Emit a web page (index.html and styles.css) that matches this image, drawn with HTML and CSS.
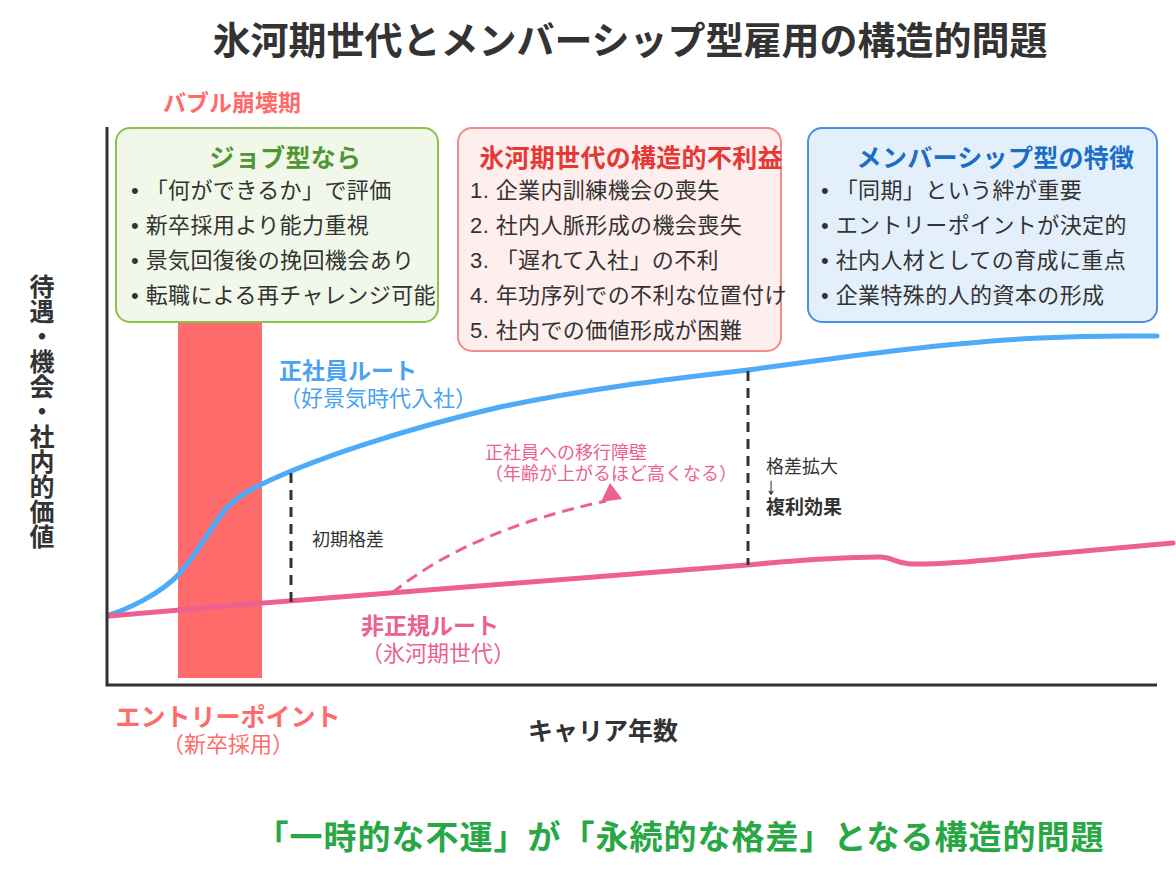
FILE: index.html
```html
<!DOCTYPE html>
<html lang="ja">
<head>
<meta charset="utf-8">
<title>氷河期世代とメンバーシップ型雇用の構造的問題</title>
<link rel="stylesheet" href="styles.css">
</head>
<body>
<div class="page">
  <h1 class="title">氷河期世代とメンバーシップ型雇用の構造的問題</h1>

  <div class="chart">
    <svg class="plot" viewBox="0 80 1176 700" width="1176" height="700" aria-hidden="true">
      <rect class="bar" x="178" y="128" width="84" height="550"/>
      <path class="line-reg" d="M109,615 C125,610 160,595 180,573 C200,550 212,525 225,510 C238,495 255,487 275,478 C320,458 400,430 500,407 C600,386 690,377 748,370 C850,356 950,342 1040,338 C1100,335 1130,336 1157,336"/>
      <path class="line-non" d="M109,616 C200,608 300,600 390,593 C520,583 640,573 747,565 C800,560 850,557 880,557 C892,557 895,563 910,564 C950,565 1000,558 1073,552 C1120,548 1150,545 1173,543"/>
      <line class="gap" x1="291" y1="473" x2="291" y2="603"/>
      <line class="gap" x1="748" y1="371" x2="748" y2="565"/>
      <path class="barrier" d="M392,593 Q470,530 606,501"/>
      <polygon class="barrier-head" points="610,483 601,502 622,499"/>
      <path class="axis" d="M107,127 V685 H1157"/>
    </svg>

    <div class="bubble">バブル崩壊期</div>
    <div class="ylabel">待遇・機会・社内的価値</div>

    <div class="cards">
      <section class="card card-job">
        <h2 class="card-title">ジョブ型なら</h2>
        <ul class="card-list">
          <li>「何ができるか」で評価</li>
          <li>新卒採用より能力重視</li>
          <li>景気回復後の挽回機会あり</li>
          <li>転職による再チャレンジ可能</li>
        </ul>
      </section>
      <section class="card card-ice">
        <h2 class="card-title">氷河期世代の構造的不利益</h2>
        <ol class="card-list numbered">
          <li>企業内訓練機会の喪失</li>
          <li>社内人脈形成の機会喪失</li>
          <li>「遅れて入社」の不利</li>
          <li>年功序列での不利な位置付け</li>
          <li>社内での価値形成が困難</li>
        </ol>
      </section>
      <section class="card card-member">
        <h2 class="card-title">メンバーシップ型の特徴</h2>
        <ul class="card-list">
          <li>「同期」という絆が重要</li>
          <li>エントリーポイントが決定的</li>
          <li>社内人材としての育成に重点</li>
          <li>企業特殊的人的資本の形成</li>
        </ul>
      </section>
    </div>

    <div class="route route-reg">
      <span class="route-name">正社員ルート</span>
      <span class="route-sub">（好景気時代入社）</span>
    </div>
    <div class="note note-barrier">
      <span>正社員への移行障壁</span>
      <span>（年齢が上がるほど高くなる）</span>
    </div>
    <div class="note note-initial">初期格差</div>
    <div class="note note-widen">
      <span>格差拡大</span>
      <span class="arrow">↓</span>
      <strong>複利効果</strong>
    </div>
    <div class="route route-non">
      <span class="route-name">非正規ルート</span>
      <span class="route-sub">（氷河期世代）</span>
    </div>
    <div class="entry">
      <span class="entry-name">エントリーポイント</span>
      <span class="entry-sub">（新卒採用）</span>
    </div>
    <div class="xlabel">キャリア年数</div>
  </div>

  <p class="conclusion">「一時的な不運」が「永続的な格差」となる構造的問題</p>
</div>
</body>
</html>
```

FILE: styles.css
```css
* { box-sizing: border-box; }

html, body {
  margin: 0;
  padding: 0;
  background: #ffffff;
}

body {
  font-family: "Liberation Sans", "Noto Sans CJK JP", sans-serif;
  color: #333333;
}

.page {
  width: 1176px;
  height: 880px;
  overflow: hidden;
}

.title {
  margin: 0;
  height: 80px;
  padding: 2px 0 0 84px;
  line-height: 78px;
  font-size: 38px;
  font-weight: 700;
  text-align: center;
  color: #333333;
  white-space: nowrap;
}

/* chart canvas */
.chart {
  position: relative;
  height: 700px;
}

.plot {
  position: absolute;
  left: 0;
  top: 0;
  display: block;
}

.bar { fill: #ff6b6b; }

.axis {
  fill: none;
  stroke: #333333;
  stroke-width: 3;
}

.line-reg {
  fill: none;
  stroke: #4dabf7;
  stroke-width: 5;
  stroke-linecap: round;
}

.line-non {
  fill: none;
  stroke: #ec6092;
  stroke-width: 5;
  stroke-linecap: round;
}

.gap {
  stroke: #333333;
  stroke-width: 3;
  stroke-dasharray: 10 7;
}

.barrier {
  fill: none;
  stroke: #ec6092;
  stroke-width: 3;
  stroke-dasharray: 12 7;
}

.barrier-head { fill: #ec6092; }

.bubble {
  position: absolute;
  left: 163px;
  top: 9px;
  font-size: 23px;
  line-height: 28px;
  font-weight: 700;
  color: #ff6b6b;
  white-space: nowrap;
}

.ylabel {
  position: absolute;
  left: 25px;
  top: 194px;
  writing-mode: vertical-rl;
  font-size: 25px;
  line-height: 30px;
  font-weight: 700;
  color: #333333;
  white-space: nowrap;
}

/* annotation cards */
.cards {
  position: absolute;
  left: 115px;
  top: 47px;
  display: flex;
  align-items: flex-start;
  gap: 18px;
}

.card {
  border: 2.5px solid;
  border-radius: 15px;
  padding: 14px 8px 0 12px;
}

.card-job {
  width: 324px;
  height: 196px;
  background: #f1f8e9;
  border-color: #8bc34a;
  padding-left: 14px;
}

.card-ice {
  width: 325px;
  height: 225px;
  background: #ffeeee;
  border-color: #f28b8b;
  padding-left: 11px;
}

.card-member {
  width: 351px;
  height: 196px;
  margin-left: 7px;
  background: #e3f0fc;
  border-color: #4a90e2;
  padding-left: 12px;
}

.card-title {
  margin: 0;
  display: flex;
  justify-content: center;
  height: 30px;
  line-height: 30px;
  font-size: 25px;
  font-weight: 700;
  letter-spacing: 0.3px;
  white-space: nowrap;
}

.card-job .card-title { color: #509632; padding-left: 11px; }
.card-ice .card-title { color: #e53935; padding-left: 20px; }
.card-member .card-title { color: #1a6ec8; padding-left: 22px; }

.card-list {
  margin: 0;
  padding: 0;
  list-style: none;
  font-size: 22px;
  line-height: 35px;
  letter-spacing: 0.4px;
  color: #333333;
  white-space: nowrap;
}

.card-list li::before {
  content: "• ";
}

.card-list.numbered {
  list-style: decimal inside;
}

.card-list.numbered li::before {
  content: none;
}

/* chart labels */
.route {
  position: absolute;
  display: flex;
  flex-direction: column;
  line-height: 27px;
  white-space: nowrap;
}

.route-name {
  font-size: 23px;
  font-weight: 700;
}

.route-sub {
  font-size: 22px;
}

.route-reg {
  left: 279px;
  top: 278px;
  color: #4aa3ef;
}

.route-non {
  left: 361px;
  top: 533px;
  color: #ec6092;
}

.note {
  position: absolute;
  display: flex;
  flex-direction: column;
  font-size: 18px;
  line-height: 20.5px;
  white-space: nowrap;
}

.note-barrier {
  left: 485px;
  top: 363px;
  color: #ec6092;
}

.note-initial {
  left: 312px;
  top: 450px;
  color: #333333;
}

.note-widen {
  left: 766px;
  top: 377px;
  color: #333333;
}

.note-widen .arrow {
  font-family: "DejaVu Sans", sans-serif;
  font-size: 17px;
  line-height: 20.5px;
  transform: scale(0.7, 1.15);
  transform-origin: left center;
}

.note-widen strong {
  font-weight: 700;
  font-size: 19px;
}

.entry {
  position: absolute;
  left: 98px;
  top: 624px;
  width: 260px;
  display: flex;
  flex-direction: column;
  align-items: center;
  line-height: 27px;
  color: #ff6b6b;
  white-space: nowrap;
}

.entry-name {
  font-size: 25px;
  font-weight: 700;
}

.entry-sub {
  font-size: 22px;
}

.xlabel {
  position: absolute;
  left: 503px;
  top: 636px;
  width: 200px;
  text-align: center;
  font-size: 25px;
  line-height: 30px;
  font-weight: 700;
  color: #333333;
}

.conclusion {
  margin: 0;
  padding: 38px 0 0 184px;
  line-height: 40px;
  font-size: 33px;
  font-weight: 700;
  letter-spacing: 1px;
  text-align: center;
  color: #28a745;
  white-space: nowrap;
}
```
